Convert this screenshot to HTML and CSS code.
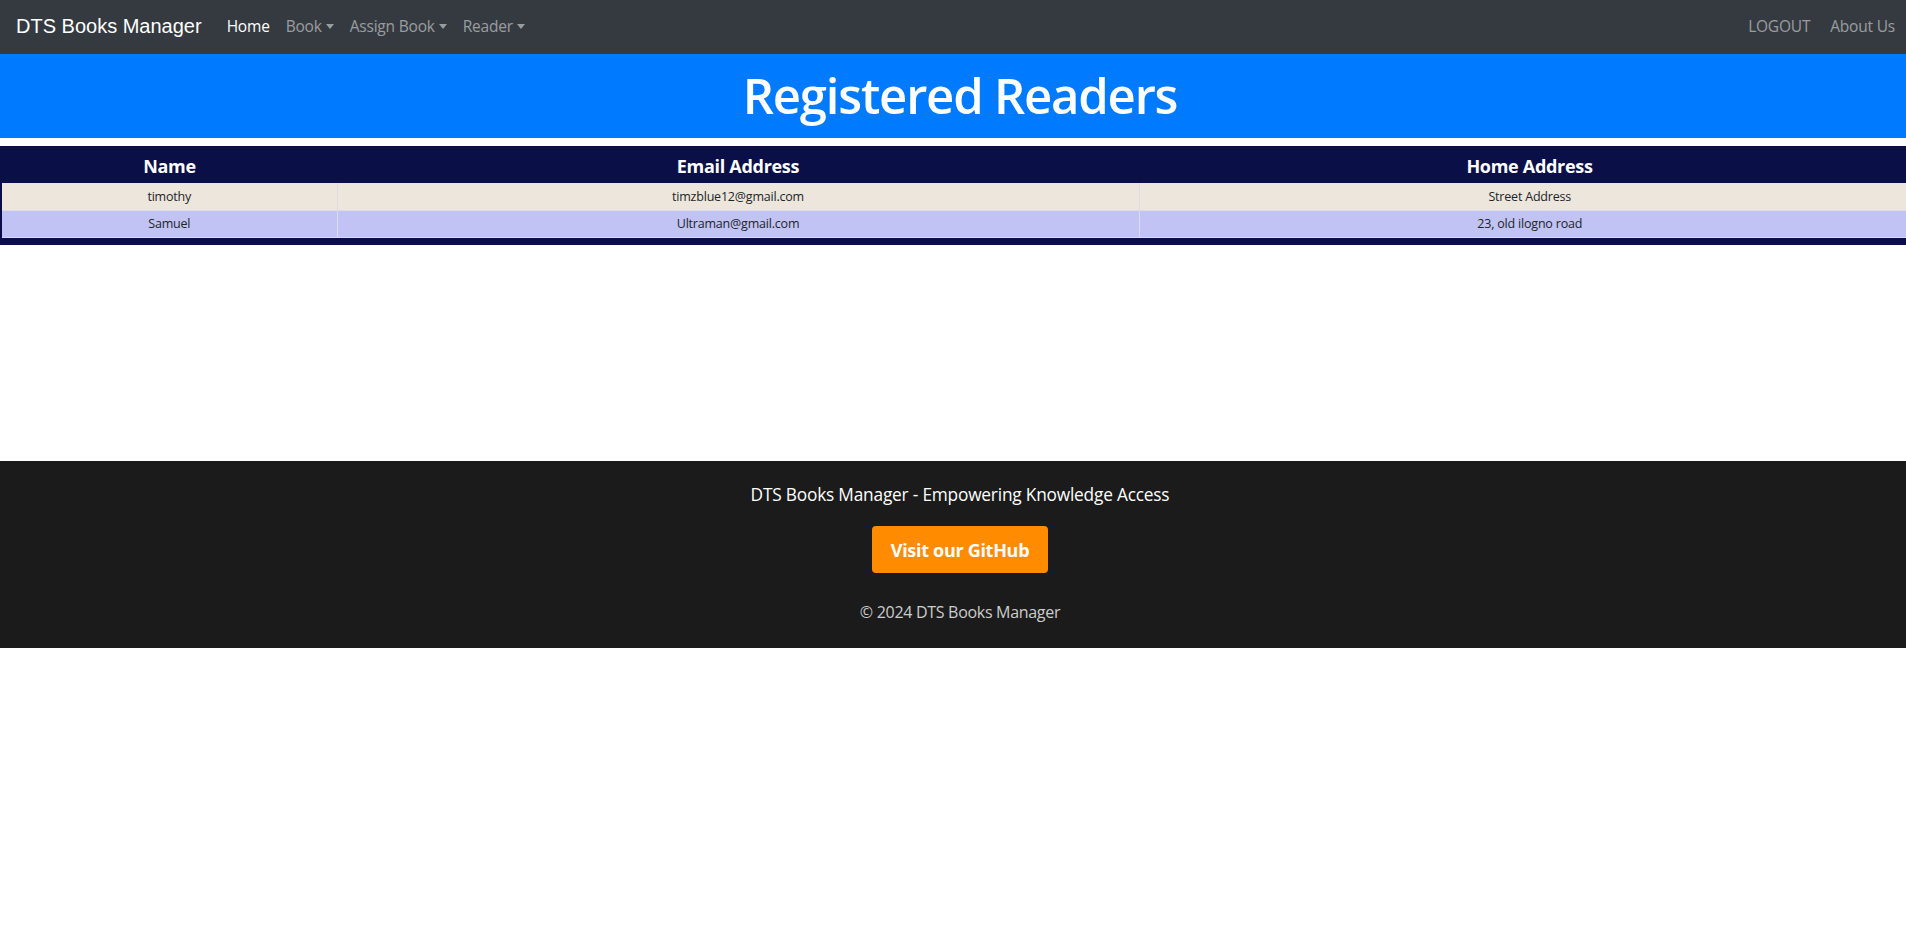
FILE: index.html
```html
<!DOCTYPE html>
<html lang="en">
<head>
<meta charset="utf-8">
<title>Registered Readers</title>
<link rel="stylesheet" href="styles.css">
</head>
<body>
<nav class="navbar">
  <a class="brand" href="#">DTS Books Manager</a>
  <ul class="nav-left">
    <li><a class="nav-link active" href="#">Home</a></li>
    <li><a class="nav-link dropdown" href="#">Book</a></li>
    <li><a class="nav-link dropdown" href="#">Assign Book</a></li>
    <li><a class="nav-link dropdown" href="#">Reader</a></li>
  </ul>
  <ul class="nav-right">
    <li><a class="nav-link" href="#">LOGOUT</a></li>
    <li><a class="nav-link" href="#">About Us</a></li>
  </ul>
</nav>

<header class="page-title">
  <h1>Registered Readers</h1>
</header>

<main class="content">
  <div class="table-wrap">
    <table class="readers">
      <colgroup>
        <col class="col-name">
        <col class="col-email">
        <col class="col-home">
      </colgroup>
      <thead>
        <tr>
          <th>Name</th>
          <th>Email Address</th>
          <th>Home Address</th>
        </tr>
      </thead>
      <tbody>
        <tr class="row-a">
          <td>timothy</td>
          <td>timzblue12@gmail.com</td>
          <td>Street Address</td>
        </tr>
        <tr class="row-b">
          <td>Samuel</td>
          <td>Ultraman@gmail.com</td>
          <td>23, old ilogno road</td>
        </tr>
      </tbody>
    </table>
  </div>
</main>

<footer class="footer">
  <p class="tagline">DTS Books Manager - Empowering Knowledge Access</p>
  <a class="github-btn" href="#">Visit our GitHub</a>
  <p class="copyright">© 2024 DTS Books Manager</p>
</footer>
</body>
</html>
```

FILE: styles.css
```css
* {
  box-sizing: border-box;
}

html, body {
  margin: 0;
  padding: 0;
  background: #ffffff;
  font-family: "Open Sans", "Noto Sans", sans-serif;
  color: #212529;
}

a {
  text-decoration: none;
}

ul {
  list-style: none;
  margin: 0;
  padding: 0;
}

/* Navbar */
.navbar {
  height: 54px;
  background: #343a40;
  display: flex;
  align-items: center;
  padding: 0 3px 0 16px;
}

.brand {
  font-family: "Liberation Sans", Arial, sans-serif;
  font-size: 20px;
  color: #ffffff;
  margin-right: 17px;
  padding-bottom: 2px;
}

.nav-left {
  display: flex;
  align-items: center;
}

.nav-right {
  display: flex;
  align-items: center;
  margin-left: auto;
}

.nav-link {
  display: block;
  font-size: 15.5px;
  line-height: 24px;
  padding: 8px 8px 10px;
  color: rgba(255, 255, 255, 0.5);
  letter-spacing: -0.2px;
}

.nav-right .nav-link {
  padding: 8px 8px 10px 12px;
}

.nav-link.active {
  color: #ffffff;
}

.nav-link.dropdown::after {
  content: "";
  display: inline-block;
  vertical-align: 3px;
  margin-left: 4px;
  border-top: 5px solid currentColor;
  border-left: 4px solid transparent;
  border-right: 4px solid transparent;
}

/* Title band */
.page-title {
  background: #007bff;
  height: 84px;
  display: flex;
  align-items: center;
  justify-content: center;
}

.page-title h1 {
  margin: 0;
  color: #ffffff;
  font-size: 49px;
  font-weight: 600;
  letter-spacing: -1.2px;
  line-height: 1;
  padding-bottom: 2px;
  padding-left: 14px;
}

/* Table */
.content {
  padding-top: 8px;
  min-height: 323px;
}

.table-wrap {
  background: #0a0f47;
  padding: 0 0 7px 2px;
  overflow: hidden;
}

.readers {
  width: calc(100% + 14px);
  border-collapse: collapse;
  table-layout: fixed;
}

.col-name {
  width: 335px;
}

.col-email {
  width: 802px;
}

.readers th {
  height: 37px;
  color: #ffffff;
  font-size: 18px;
  font-weight: 700;
  text-align: center;
  letter-spacing: -0.3px;
  padding: 3px 0 0;
  vertical-align: middle;
}

.readers td {
  height: 27px;
  font-size: 12.5px;
  text-align: center;
  color: #212529;
  border: 1px solid #dcdde6;
  border-top: none;
  padding: 0;
  letter-spacing: -0.2px;
}

.readers tbody tr td:first-child {
  border-left: none;
}

.readers tbody tr td:last-child {
  border-right: none;
}

.row-a td {
  background: #ede6dc;
}

.row-b td {
  background: #c0c3f4;
}

/* Footer */
.footer {
  background: #1b1b1b;
  text-align: center;
  padding: 22px 0 24px 14px;
  display: flex;
  flex-direction: column;
  align-items: center;
}

.tagline {
  margin: 0;
  color: #ffffff;
  font-size: 17.3px;
  line-height: 24px;
  letter-spacing: -0.2px;
}

.github-btn {
  margin-top: 19px;
  display: flex;
  align-items: center;
  justify-content: center;
  width: 176px;
  height: 47px;
  background: #ff8c00;
  color: #ffffff;
  font-weight: 700;
  font-size: 18px;
  border-radius: 4px;
  letter-spacing: -0.3px;
}

.copyright {
  margin: 27px 0 0;
  color: #cccccc;
  font-size: 16px;
  line-height: 24px;
  letter-spacing: -0.3px;
}
```
